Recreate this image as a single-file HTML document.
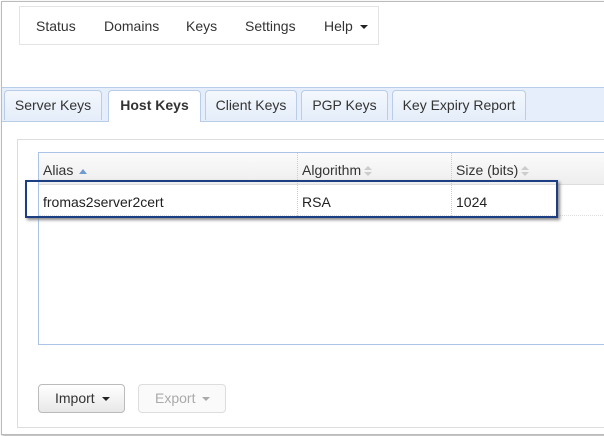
<!DOCTYPE html>
<html><head><style>
body{margin:0;width:604px;height:436px;background:#fff;font-family:"Liberation Sans",Arial,sans-serif;font-size:14px;color:#333;position:relative;overflow:hidden}
.abs{position:absolute}
.frame{left:1px;top:1px;width:610px;height:432px;border:1px solid #bbb;box-shadow:1px 1px 2px #aaa}
.nav{left:19px;top:6px;width:360px;height:39px;border:1px solid #e3e3e3;box-sizing:border-box}
.nav span{position:absolute;top:11px;color:#333}
.band{left:2px;top:87px;width:610px;height:33px;background:#e5eefa;border-top:1px solid #b8cde8;border-bottom:1px solid #b8cde8}
.tab{top:90px;height:30px;border:1px solid #b9cde9;border-bottom:none;border-radius:4px 4px 0 0;background:linear-gradient(#f4f8fd,#e4edf9);text-align:center;line-height:29px;color:#333;box-sizing:border-box}
.tab.act{background:#fff;font-weight:bold;height:32px}
.panel{left:17px;top:139px;width:600px;height:289px;border:1px solid #ddd;box-sizing:border-box}
.table{left:38px;top:152px;width:580px;height:193px;border:1px solid #a9c4e6;box-sizing:border-box}
.hdr{left:39px;top:153px;width:580px;height:31px;background:linear-gradient(#fbfbfb,#eeeeee);border-bottom:1px solid #ddd}
.sep{top:153px;width:0;height:63px;border-left:1px dotted #ccc}
.t{position:absolute}
.hl{left:25px;top:180px;width:529px;height:34px;border:2px solid #1c3f84;box-shadow:2px 2px 3px #888}
.btn{top:384px;height:29px;border:1px solid #bbb;border-radius:4px;box-sizing:border-box;line-height:27px;padding-left:16px;background:linear-gradient(#fff,#e8e8e8)}
.car{display:inline-block;width:0;height:0;border-left:4px solid transparent;border-right:4px solid transparent;border-top:4px solid #222;vertical-align:middle;margin-left:7px}
.ud{display:inline-block;vertical-align:middle;margin-left:3px;width:8px;height:10px;position:relative}
.ud:before,.ud:after{content:"";position:absolute;left:0;border-left:4px solid transparent;border-right:4px solid transparent}
.ud:before{top:0;border-bottom:4px solid #ccc}
.ud:after{top:6px;border-top:4px solid #ccc}
</style></head><body>
<div class="abs frame"></div>
<div class="abs nav">
<span style="left:16px">Status</span><span style="left:84px">Domains</span><span style="left:166px">Keys</span><span style="left:225px">Settings</span><span style="left:304px">Help</span><span class="car" style="position:absolute;left:340px;top:18px;margin:0"></span>
</div>
<div class="abs band"></div>
<div class="abs tab" style="left:4px;width:98px">Server Keys</div>
<div class="abs tab act" style="left:108px;width:93px">Host Keys</div>
<div class="abs tab" style="left:205px;width:92px">Client Keys</div>
<div class="abs tab" style="left:301px;width:87px">PGP Keys</div>
<div class="abs tab" style="left:392px;width:134px">Key Expiry Report</div>
<div class="abs panel"></div>
<div class="abs table"></div>
<div class="abs hdr"></div>
<div class="abs sep" style="left:297px"></div>
<div class="abs sep" style="left:451px"></div>
<div class="abs" style="left:39px;top:215px;width:580px;border-top:1px dotted #ddd"></div>
<span class="t" style="left:43px;top:162px">Alias <span style="display:inline-block;vertical-align:middle;border-left:4px solid transparent;border-right:4px solid transparent;border-bottom:5px solid #6f9bd1;margin-left:2px"></span></span>
<span class="t" style="left:302px;top:162px">Algorithm<span class="ud"></span></span>
<span class="t" style="left:456px;top:162px">Size (bits)<span class="ud"></span></span>
<span class="t" style="left:43px;top:194px;color:#222">fromas2server2cert</span>
<span class="t" style="left:302px;top:194px;color:#222">RSA</span>
<span class="t" style="left:456px;top:194px;color:#222">1024</span>
<div class="abs hl"></div>
<div class="abs btn" style="left:38px;width:87px;color:#333">Import<span class="car"></span></div>
<div class="abs btn" style="left:138px;width:88px;color:#aaa;border-color:#ddd;background:#fafafa">Export<span class="car" style="border-top-color:#aaa"></span></div>
</body></html>
